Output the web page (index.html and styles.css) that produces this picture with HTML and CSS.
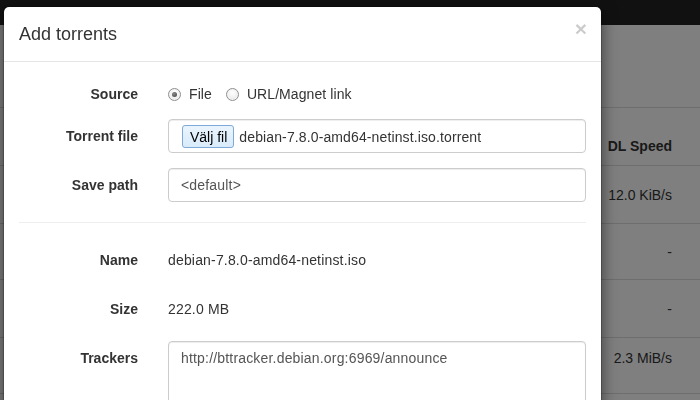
FILE: index.html
```html
<!DOCTYPE html>
<html>
<head>
<meta charset="utf-8">
<link rel="stylesheet" href="styles.css">
</head>
<body>
<div class="page">
  <div class="navbar"></div>
  <div class="content">
    <div class="trow thead">
      <div></div><div class="dl">DL Speed</div><div></div>
    </div>
    <div class="trow tall"><div></div><div class="dl">12.0 KiB/s</div><div></div></div>
    <div class="trow short"><div></div><div class="dl">-</div><div></div></div>
    <div class="trow tall"><div></div><div class="dl">-</div><div></div></div>
    <div class="trow short top"><div></div><div class="dl">2.3 MiB/s</div><div></div></div>
    <div class="trow tall"><div></div><div class="dl"></div><div></div></div>
  </div>
</div>
<div class="backdrop"></div>
<div class="modal">
  <div class="modal-header">
    <span class="close">×</span>
    <h4 class="modal-title">Add torrents</h4>
  </div>
  <div class="modal-body">
    <div class="form-group source">
      <label class="ctl-label">Source</label>
      <div class="radios">
        <span class="radio-inline"><span class="radio checked"></span>File</span>
        <span class="radio-inline second"><span class="radio"></span>URL/Magnet link</span>
      </div>
    </div>
    <div class="form-group">
      <label class="ctl-label">Torrent file</label>
      <div class="form-control file-control">
        <button class="file-btn">Välj fil</button>
        <span class="file-name">debian-7.8.0-amd64-netinst.iso.torrent</span>
      </div>
    </div>
    <div class="form-group last">
      <label class="ctl-label">Save path</label>
      <div class="form-control placeholder">&lt;default&gt;</div>
    </div>
    <hr class="divider">
    <div class="form-group">
      <label class="ctl-label">Name</label>
      <div class="static">debian-7.8.0-amd64-netinst.iso</div>
    </div>
    <div class="form-group">
      <label class="ctl-label">Size</label>
      <div class="static">222.0 MB</div>
    </div>
    <div class="form-group">
      <label class="ctl-label">Trackers</label>
      <div class="form-control textarea">http://bttracker.debian.org:6969/announce</div>
    </div>
  </div>
</div>
</body>
</html>
```
FILE: styles.css
```css
html, body {
  margin: 0;
  padding: 0;
  width: 700px;
  height: 400px;
  overflow: hidden;
  font-family: "Liberation Sans", Arial, sans-serif;
  font-size: 14px;
  line-height: 20px;
  color: #333;
  background: #fff;
}
* { box-sizing: border-box; }

.page { width: 700px; height: 400px; }
.navbar { height: 25px; background: #222; }
.content { padding-top: 82px; }

.trow {
  display: grid;
  grid-template-columns: 595px 85px 1fr;
  border-top: 1px solid #ddd;
  align-items: center;
}
.trow.thead { height: 58px; align-items: end; padding-bottom: 9px; font-weight: bold; }
.trow.tall { height: 58px; }
.trow.short { height: 56px; }
.trow.top { align-items: start; padding-top: 10px; }
.dl { text-align: right; padding-right: 8px; white-space: nowrap; }

.backdrop {
  position: fixed;
  inset: 0;
  background: rgba(0, 0, 0, 0.5);
}

.modal {
  position: absolute;
  left: 3px;
  top: 6px;
  width: 599px;
  height: 520px;
  background: #fff;
  background-clip: padding-box;
  border: 1px solid rgba(0, 0, 0, 0.2);
  border-radius: 6px;
  box-shadow: 0 5px 15px rgba(0, 0, 0, 0.5);
}

.modal-header {
  padding: 14px 15px;
  border-bottom: 1px solid #e5e5e5;
}
.modal-title {
  margin: 0;
  font-size: 18px;
  font-weight: normal;
  line-height: 26px;
  color: #333;
}
.close {
  float: right;
  font-size: 21px;
  font-weight: bold;
  line-height: 1;
  margin-top: -3px;
  margin-right: -1px;
  color: #000;
  opacity: 0.2;
}

.modal-body { padding: 15px; }

.form-group {
  display: grid;
  grid-template-columns: 119px 1fr;
  column-gap: 30px;
  margin-bottom: 15px;
}
.form-group.last { margin-bottom: 0; }
.ctl-label {
  text-align: right;
  font-weight: bold;
  padding-top: 7px;
  line-height: 20px;
}

.radios { padding-top: 7px; display: flex; align-items: center; }
.radio-inline { display: inline-flex; align-items: center; line-height: 20px; letter-spacing: 0.08px; }
.radio-inline.second { margin-left: 14px; }
.radio {
  width: 13px;
  height: 13px;
  margin-right: 8px;
  border-radius: 50%;
  border: 1px solid #8f8f8f;
  background: radial-gradient(circle at 50% 35%, #ffffff 0%, #f0f0f0 55%, #dcdcdc 100%);
  box-shadow: inset 0 0 0 1px #f4f4f4;
  position: relative;
}
.radio.checked::after {
  content: "";
  position: absolute;
  left: 3px;
  top: 3px;
  width: 5px;
  height: 5px;
  border-radius: 50%;
  background: radial-gradient(circle at 40% 35%, #8a8a8a, #3f3f3f);
}

.form-control {
  height: 34px;
  padding: 6px 12px;
  border: 1px solid #ccc;
  border-radius: 4px;
  box-shadow: inset 0 1px 1px rgba(0, 0, 0, 0.075);
  line-height: 20px;
  color: #555;
  background: #fff;
  letter-spacing: 0.18px;
}
.file-control {
  display: flex;
  align-items: center;
  padding: 1px 12px 0 13px;
}
.file-btn {
  font-family: "Liberation Sans", Arial, sans-serif;
  font-size: 14px;
  letter-spacing: 0;
  height: 23px;
  padding: 0 6px 0 7px;
  margin: 0 5px 0 0;
  color: #000;
  border: 1px solid #7ea9d8;
  border-radius: 3px;
  background: linear-gradient(#eaf4fd, #d9ebfb);
  line-height: 20px;
}
.file-name { color: #333; letter-spacing: 0.12px; }
.placeholder { color: #555; }
.textarea { height: 100px; color: #555; }

.divider {
  margin: 20px 0;
  border: 0;
  border-top: 1px solid #eee;
  height: 0;
}

.static { padding: 7px 0; line-height: 20px; color: #333; letter-spacing: 0.17px; }
```
